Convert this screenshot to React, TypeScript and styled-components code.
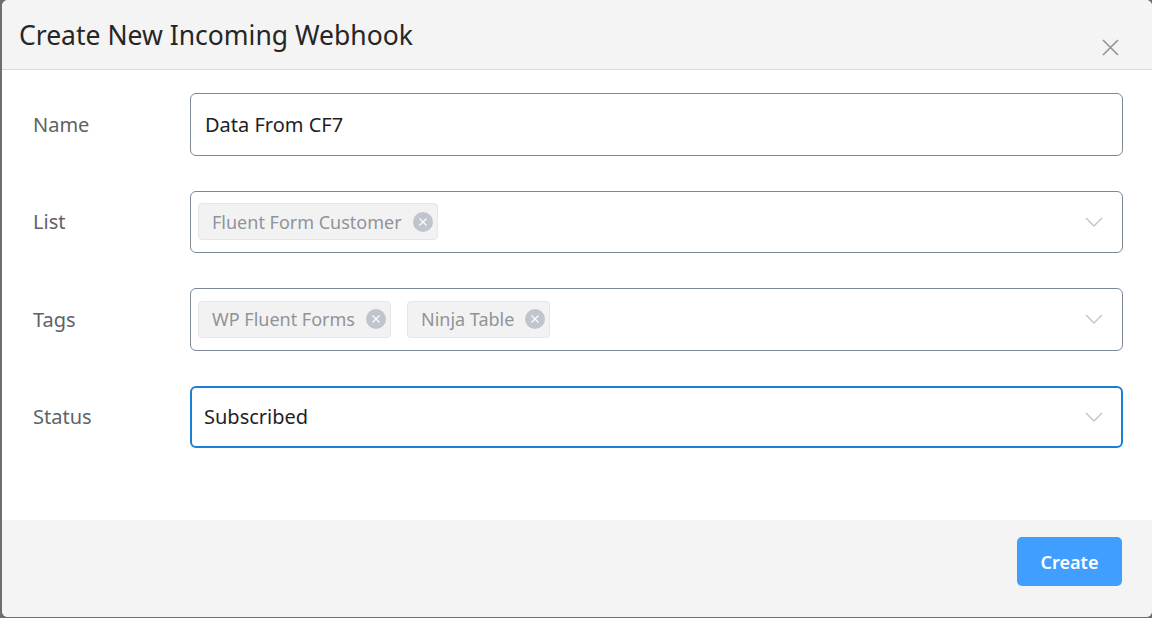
import React from 'react'
import styled, { createGlobalStyle } from 'styled-components'

const GlobalStyle = createGlobalStyle`
  html, body {
    margin: 0;
    padding: 0;
    background: #6e6e6e;
    font-family: 'Noto Sans', 'Open Sans', sans-serif;
  }
  * { box-sizing: border-box; }
`

const Chevron = () => (
  <svg width="18" height="10" viewBox="0 0 18 10" fill="none">
    <path d="M1 1l8 8 8-8" stroke="#c0c4cc" strokeWidth="1.4" />
  </svg>
)

const CloseIcon = () => (
  <svg width="17" height="17" viewBox="0 0 17 17" fill="none">
    <path d="M1 1l15 15M16 1L1 16" stroke="#909399" strokeWidth="1.6" />
  </svg>
)

const TagClose = () => (
  <TagX>
    <svg width="10" height="10" viewBox="0 0 10 10" fill="none">
      <path d="M1.5 1.5l7 7M8.5 1.5l-7 7" stroke="#fff" strokeWidth="1.2" />
    </svg>
  </TagX>
)

const App = () => {
  return (
    <>
      <GlobalStyle />
      <Modal>
        <Header>
          <Title>Create New Incoming Webhook</Title>
          <CloseBtn type="button"><CloseIcon /></CloseBtn>
        </Header>
        <Body>
          <Row>
            <Label>Name</Label>
            <Field>
              <Value>Data From CF7</Value>
            </Field>
          </Row>
          <Row>
            <Label>List</Label>
            <Field $select>
              <TagList>
                <Tag>Fluent Form Customer<TagClose /></Tag>
              </TagList>
              <Chevron />
            </Field>
          </Row>
          <Row>
            <Label>Tags</Label>
            <Field $select>
              <TagList>
                <Tag>WP Fluent Forms<TagClose /></Tag>
                <Tag>Ninja Table<TagClose /></Tag>
              </TagList>
              <Chevron />
            </Field>
          </Row>
          <Row>
            <Label>Status</Label>
            <Field $select $focused>
              <Value>Subscribed</Value>
              <Chevron />
            </Field>
          </Row>
        </Body>
        <Footer>
          <PrimaryBtn type="button">Create</PrimaryBtn>
        </Footer>
      </Modal>
    </>
  )
}

export default App

const Modal = styled.div`
  margin-left: 2px;
  width: 1150px;
  height: 617px;
  background: #fff;
  border-radius: 6px;
  overflow: hidden;
  display: flex;
  flex-direction: column;
`

const Header = styled.div`
  height: 70px;
  flex-shrink: 0;
  background: #f4f4f4;
  border-bottom: 1px solid #dcdcdc;
  display: flex;
  align-items: flex-start;
  justify-content: space-between;
  padding: 17px 33px 0 17px;
`

const Title = styled.h2`
  margin: 0;
  font-size: 26.5px;
  font-weight: 400;
  color: #262626;
  line-height: 36px;
`

const CloseBtn = styled.button`
  border: none;
  background: none;
  padding: 0;
  margin-top: 22px;
  cursor: pointer;
  display: flex;
`

const Body = styled.div`
  flex: 1;
  padding: 23px 29px 0 31px;
  display: flex;
  flex-direction: column;
  gap: 35px;
`

const Row = styled.div`
  display: flex;
  align-items: center;
`

const Label = styled.label`
  width: 157px;
  font-size: 20px;
  color: #5f6266;
`

const Field = styled.div<{ $select?: boolean; $focused?: boolean }>`
  flex: 1;
  height: 62.5px;
  border: ${p => (p.$focused ? '2px solid #1a7fd6' : '1px solid #7d8893')};
  border-radius: 6px;
  display: flex;
  align-items: center;
  justify-content: space-between;
  padding: ${p => (p.$focused ? '0 18px 0 5px' : '0 19px 0 7px')};
  background: #fff;
`

const Value = styled.span`
  font-size: 20px;
  color: #1f1f1f;
  padding-left: 7px;
`

const TagList = styled.div`
  display: flex;
  gap: 16px;
`

const Tag = styled.span`
  display: inline-flex;
  align-items: center;
  gap: 11px;
  height: 37px;
  padding: 0 4px 0 13px;
  background: #f2f2f3;
  border: 1px solid #e6e6e8;
  border-radius: 4px;
  font-size: 18px;
  color: #909399;
`

const TagX = styled.span`
  width: 20px;
  height: 20px;
  border-radius: 50%;
  background: #c0c4cc;
  display: inline-flex;
  align-items: center;
  justify-content: center;
`

const Footer = styled.div`
  height: 97px;
  flex-shrink: 0;
  background: #f4f4f4;
  display: flex;
  justify-content: flex-end;
  padding: 17px 30px 0 0;
`

const PrimaryBtn = styled.button`
  width: 105px;
  height: 49px;
  border: none;
  border-radius: 5px;
  background: #409eff;
  color: #fff;
  font-family: 'Noto Sans', 'Open Sans', sans-serif;
  font-size: 18px;
  font-weight: 600;
  cursor: pointer;
`
